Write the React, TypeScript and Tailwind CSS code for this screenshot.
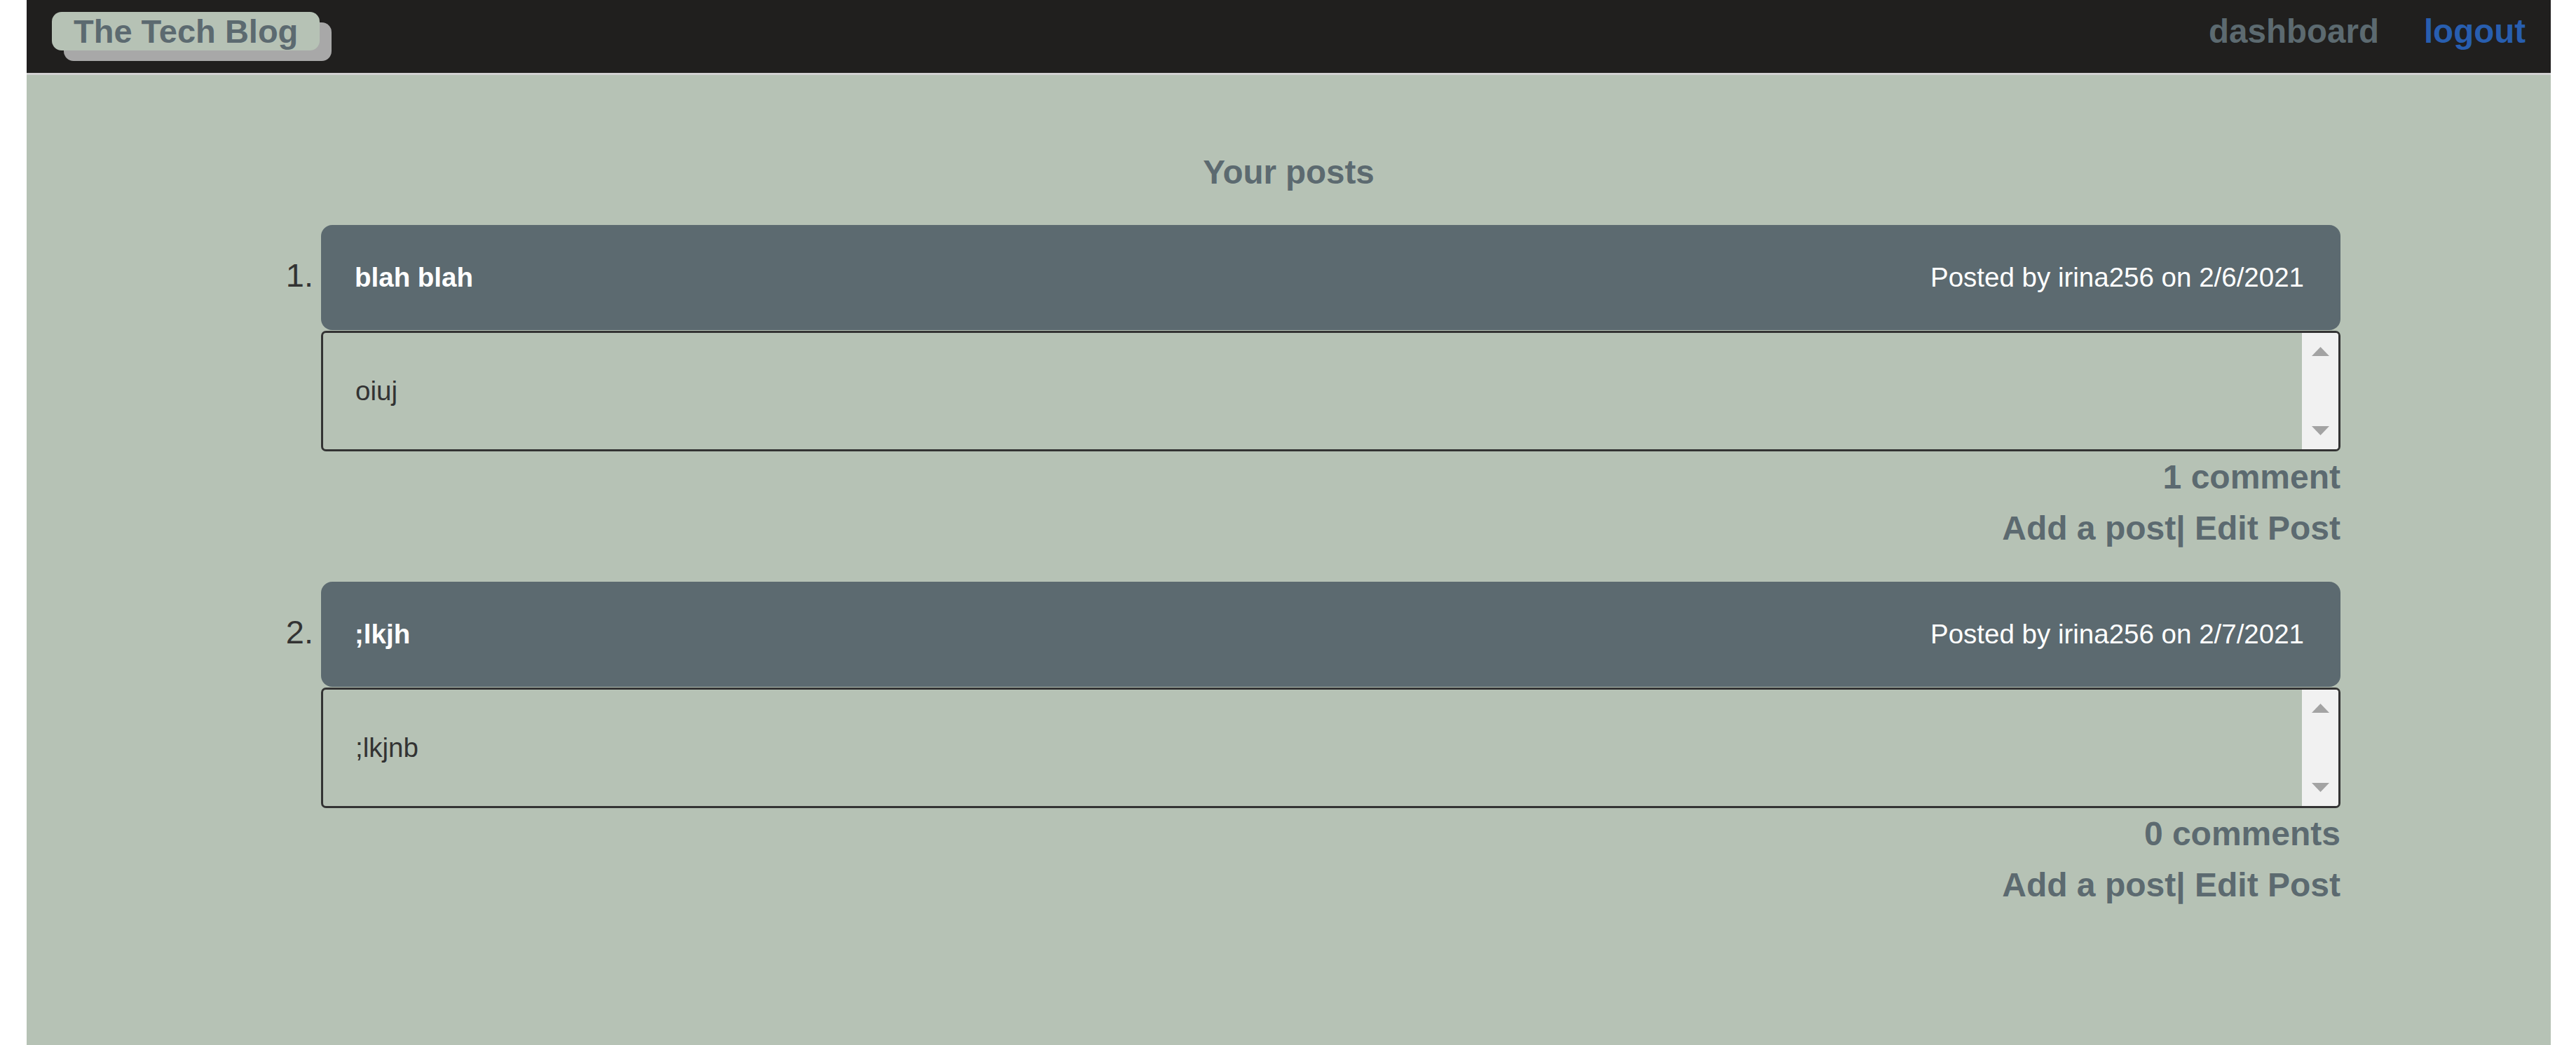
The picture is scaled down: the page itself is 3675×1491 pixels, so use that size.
import React from "react";

type Post = { n: number; title: string; date: string; body: string; comments: string };

const posts: Post[] = [
  { n: 1, title: "blah blah", date: "2/6/2021", body: "oiuj", comments: "1 comment" },
  { n: 2, title: ";lkjh", date: "2/7/2021", body: ";lkjnb", comments: "0 comments" },
];

function FakeScrollbar() {
  return (
    <div className="w-[52px] self-stretch bg-[#f1f1f1] flex flex-col items-center justify-between pt-[20px] pb-[20px]">
      <svg width="25" height="13" viewBox="0 0 25 13">
        <polygon points="12.5,0 25,13 0,13" fill="#a3a3a3" />
      </svg>
      <svg width="25" height="13" viewBox="0 0 25 13">
        <polygon points="0,0 25,0 12.5,13" fill="#a3a3a3" />
      </svg>
    </div>
  );
}

function PostItem({ post, first }: { post: Post; first: boolean }) {
  return (
    <li className={first ? "" : "mt-[49px]"}>
      <div className="flex items-baseline">
        <span className="w-[60px] shrink-0 text-right pr-[11px] text-[47px] leading-[54px] text-[#333333]">
          {post.n}.
        </span>
        <div className="flex-1 h-[150px] rounded-[16px] bg-[#5c6a70] flex items-center justify-between pl-[48px] pr-[52px] text-white text-[38.5px] leading-[44px]">
          <span className="font-bold">{post.title}</span>
          <span>
            Posted by irina256 on {post.date}
          </span>
        </div>
      </div>
      <div className="ml-[60px]">
        <div className="mt-[1px] h-[172px] border-[3px] border-[#333333] rounded-[7px] flex items-stretch overflow-hidden">
          <div className="flex-1 flex items-center pl-[46px] text-[38.5px] leading-[44px] text-[#333333]">
            {post.body}
          </div>
          <FakeScrollbar />
        </div>
        <p className="mt-[10px] text-right font-bold text-[48px] leading-[54px] text-[#5c6a70]">
          {post.comments}
        </p>
        <p className="mt-[19px] text-right font-bold text-[48px] leading-[54px] text-[#5c6a70]">
          <a>Add a post</a>
          <a>| Edit Post</a>
        </p>
      </div>
    </li>
  );
}

export default function App() {
  return (
    <div className="min-h-screen flex flex-col ml-[38px] mr-[36px] font-['Liberation_Sans',Arial,sans-serif]">
      <header className="h-[107px] shrink-0 bg-[#201f1e] border-b-[3px] border-[#d2d2d2] flex justify-between items-start">
        <div className="ml-[36px] mt-[17px] h-[55px] px-[31px] rounded-[14px] bg-[#b6c2b5] shadow-[17px_15px_0_#a8a8a8] text-[47px] leading-[55px] font-bold text-[#5c6a70]">
          The Tech Blog
        </div>
        <nav className="mt-[18px] mr-[36px] flex gap-[64px] text-[47.5px] leading-[54px] font-bold">
          <a className="text-[#5c6a70]">dashboard</a>
          <a className="text-[#285eaf]">logout</a>
        </nav>
      </header>
      <main className="flex-1 bg-[#b6c2b5] pt-[112px] pb-[80px]">
        <h2 className="text-center font-bold text-[47.5px] leading-[54px] text-[#5c6a70]">Your posts</h2>
        <ol className="mt-[48px] ml-[360px] mr-[300px]">
          {posts.map((p, i) => (
            <PostItem key={p.n} post={p} first={i === 0} />
          ))}
        </ol>
      </main>
    </div>
  );
}
